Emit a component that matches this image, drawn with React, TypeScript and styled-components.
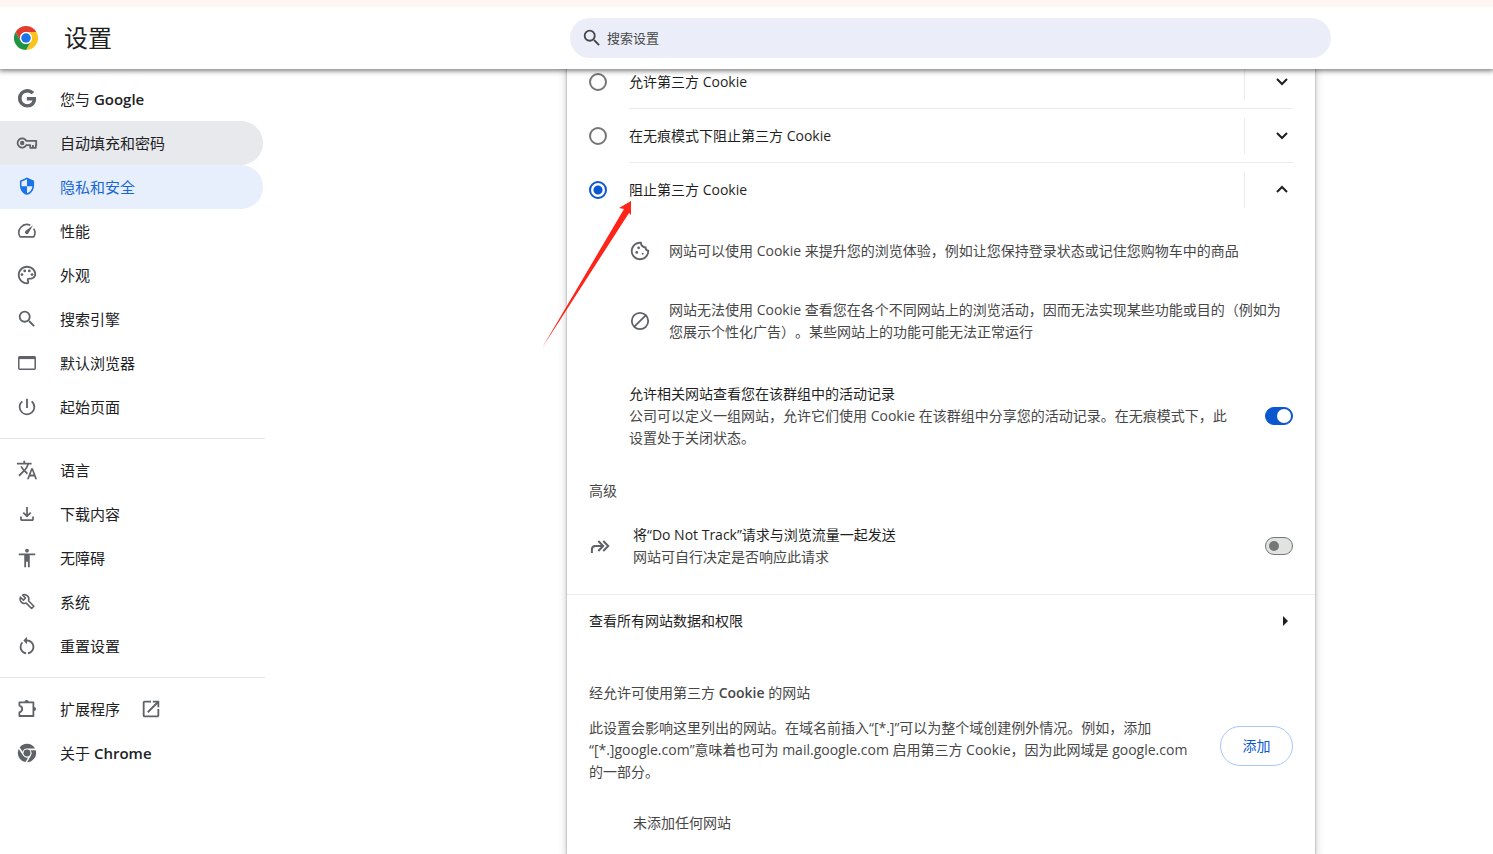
import React from 'react';
import styled, { createGlobalStyle, css } from 'styled-components';
import {
  MdAccessibility,
  MdOpenInNew,
  MdOutlineCookie,
  MdOutlinePalette,
  MdPowerSettingsNew,
  MdRestartAlt,
  MdSearch,
  MdSecurity,
  MdTranslate,
} from 'react-icons/md';

const GlobalStyle = createGlobalStyle`
  * { box-sizing: border-box; }
  body {
    margin: 0;
    background: #fff;
    color: #1f1f1f;
    font-family: "Open Sans", "Noto Sans CJK SC", sans-serif;
    font-size: 14px;
    line-height: 22px;
    text-spacing-trim: space-all;
  }
  p, h1, h2, ul { margin: 0; padding: 0; }
`;

const Page = styled.div`
  display: flex;
  flex-direction: column;
  min-height: 100vh;
`;

const Header = styled.header`
  position: sticky;
  top: 0;
  z-index: 2;
  display: flex;
  align-items: center;
  height: 69px;
  border-top: 7px solid #fff6f3;
  background: #fff;
  box-shadow: 0 1px 5px 1px rgba(0, 0, 0, 0.5);
`;

const Brand = styled.div`
  display: flex;
  flex: none;
  align-items: center;
  gap: 26px;
  width: 570px;
  padding-left: 14px;
`;

const Title = styled.h1`
  font-size: 24px;
  font-weight: 400;
  line-height: 32px;
`;

const SearchBox = styled.label`
  display: flex;
  flex: 1;
  align-items: center;
  gap: 4px;
  height: 40px;
  margin-right: 162px;
  padding: 0 11px;
  border-radius: 20px;
  background: #ebeef8;
  color: #474747;
`;

const SearchInput = styled.input`
  flex: 1;
  min-width: 0;
  padding: 0;
  border: 0;
  outline: 0;
  background: transparent;
  font: inherit;
  font-size: 13px;
  &::placeholder { color: #474747; opacity: 1; }
`;

const Body = styled.div`
  display: flex;
  flex: 1;
`;

const Sidebar = styled.nav`
  flex: none;
  width: 265px;
  padding-top: 8px;
`;

const NavGroup = styled.div`
  & + & {
    margin-top: 9px;
    padding-top: 9px;
    border-top: 1px solid #e6e6e8;
  }
`;

const NavItem = styled.a<{ $state?: 'hover' | 'selected' }>`
  display: flex;
  align-items: center;
  gap: 20px;
  height: 44px;
  margin-right: 2px;
  padding-left: 16px;
  border-radius: 0 22px 22px 0;
  color: #202124;
  font-size: 15px;
  text-decoration: none;
  & > svg { flex: none; color: #5f6368; }
  ${({ $state }) => $state === 'hover' && css`background: #e8e9ed;`}
  ${({ $state }) => $state === 'selected' && css`
    background: #e7effd;
    color: #1967d2;
    & > svg { color: #1a73e8; }
  `}
`;

const NavLabel = styled.span`
  padding-left: 2px;
`;

const Strong = styled.span`
  font-weight: 600;
`;

const Main = styled.main`
  display: flex;
  flex: 1;
  min-width: 0;
  padding: 0 178px 0 302px;
`;

const Card = styled.section`
  flex: 1;
  min-width: 0;
  margin-top: -14px;
  background: #fff;
  box-shadow: 0 1px 2px rgba(60, 64, 67, 0.5), 0 2px 7px 2px rgba(60, 64, 67, 0.2);
`;

const Section = styled.div`
  padding: 0 22px;
`;

const Option = styled.div`
  display: flex;
  align-items: center;
  gap: 22px;
`;

const Radio = styled.input`
  flex: none;
  width: 18px;
  height: 18px;
  margin: 0;
  border: 2px solid #747775;
  border-radius: 50%;
  appearance: none;
  background: #fff;
  &:checked {
    border-color: #0b57d0;
    background: radial-gradient(circle, #0b57d0 4px, #fff 5px);
  }
`;

const OptionBody = styled.div<{ $open?: boolean }>`
  display: flex;
  flex: 1;
  align-items: center;
  height: ${({ $open }) => ($open ? '53px' : '54px')};
  border-bottom: ${({ $open }) => ($open ? '0' : '1px solid #ebebeb')};
`;

const OptionLabel = styled.label`
  flex: 1;
`;

const Expand = styled.button`
  display: flex;
  align-items: center;
  justify-content: flex-end;
  width: 49px;
  height: 36px;
  padding: 0 1px 0 0;
  border: 0;
  border-left: 1px solid #ebebeb;
  background: transparent;
  color: #1f1f1f;
`;

const Details = styled.ul`
  display: flex;
  flex-direction: column;
  gap: 37px;
  padding: 24px 0 40px 40px;
  list-style: none;
`;

const Detail = styled.li`
  display: flex;
  align-items: center;
  gap: 18px;
  color: #474747;
  & > svg { flex: none; color: #5f6368; }
`;

const SettingRow = styled.div<{ $indent?: boolean }>`
  display: flex;
  align-items: center;
  gap: 22px;
  padding-left: ${({ $indent }) => ($indent ? '40px' : '0')};
`;

const SettingText = styled.label`
  flex: 1;
`;

const Secondary = styled.p`
  color: #474747;
`;

const Hint = styled.span`
  display: block;
  color: #474747;
`;

const Toggle = styled.input`
  display: flex;
  flex: none;
  align-items: center;
  width: 28px;
  height: 18px;
  margin: 0;
  padding: 0 3px;
  border: 1px solid #747775;
  border-radius: 9px;
  appearance: none;
  background: #e1e3e1;
  &::before {
    content: "";
    width: 10px;
    height: 10px;
    border-radius: 50%;
    background: #747775;
  }
  &:checked {
    justify-content: flex-end;
    padding: 0 1px;
    border-color: #0b57d0;
    background: #0b57d0;
  }
  &:checked::before {
    width: 14px;
    height: 14px;
    background: #fff;
  }
`;

const SubHeading = styled.h2`
  padding: 31px 0 22px;
  color: #474747;
  font-size: 14px;
  font-weight: 400;
`;

const LinkRow = styled.a`
  display: flex;
  align-items: center;
  justify-content: space-between;
  height: 53px;
  margin-top: 26px;
  padding: 0 22px;
  border-top: 1px solid #ebebeb;
  color: #1f1f1f;
  text-decoration: none;
`;

const ListHeading = styled.h2`
  padding: 35px 0 13px;
  color: #474747;
  font-size: 14px;
  font-weight: 400;
`;

const Exceptions = styled.div`
  display: flex;
  align-items: flex-start;
  justify-content: space-between;
`;

const AddButton = styled.button`
  flex: none;
  width: 73px;
  height: 40px;
  margin-top: 9px;
  padding: 0;
  border: 1px solid #a8c7fa;
  border-radius: 20px;
  background: #fff;
  color: #0b57d0;
  font: inherit;
`;

const Empty = styled.p`
  padding: 29px 0 18px 44px;
  color: #474747;
`;

const Pointer = styled.svg`
  position: absolute;
  z-index: 1;
  top: 201px;
  left: 542px;
  pointer-events: none;
`;

const ChromeLogo = () => (
  <svg width="24" height="24" viewBox="0 0 48 48" aria-hidden="true">
    <circle cx="24" cy="24" r="24" fill="#fff" />
    <path d="M3.2 12A24 24 0 0 1 44.8 12H24a12 12 0 0 0-10.4 18Z" fill="#e33b2e" />
    <path d="M44.8 12A24 24 0 0 1 24 48l10.4-18A12 12 0 0 0 24 12Z" fill="#fcc31e" />
    <path d="M24 48A24 24 0 0 1 3.2 12l10.4 18A12 12 0 0 0 34.4 30Z" fill="#229342" />
    <circle cx="24" cy="24" r="12" fill="#fff" />
    <circle cx="24" cy="24" r="9.5" fill="#1a73e8" />
  </svg>
);

const ChromeMono = () => (
  <svg width="22" height="22" viewBox="0 0 24 24" fill="currentColor" aria-hidden="true">
    <circle cx="12" cy="12" r="3.8" />
    <path d="M12 2a10 10 0 0 1 8.8 5.2H12a4.9 4.9 0 0 0-4.7 3.4L4 5.9A10 10 0 0 1 12 2Z" />
    <path d="M21.5 9a10 10 0 0 1-9.4 13l4.2-7.3A4.9 4.9 0 0 0 15.8 9Z" />
    <path d="M3 7.6l4.7 7.2a4.9 4.9 0 0 0 5.6 2L10.4 21.9A10 10 0 0 1 3 7.6Z" />
  </svg>
);

const GoogleMono = () => (
  <svg width="22" height="22" viewBox="-3 -2 30 30" fill="currentColor" stroke="currentColor" strokeWidth="1.4" aria-hidden="true">
    <path d="M12.48 10.92v3.28h7.84c-.24 1.84-.853 3.187-1.787 4.133-1.147 1.147-2.933 2.4-6.053 2.4-4.827 0-8.6-3.893-8.6-8.72s3.773-8.72 8.6-8.72c2.6 0 4.507 1.027 5.907 2.347l2.307-2.307C18.747 1.44 16.133 0 12.48 0 5.867 0 .307 5.387.307 12s5.56 12 12.173 12c3.573 0 6.267-1.173 8.373-3.36 2.16-2.16 2.84-5.213 2.84-7.667 0-.76-.053-1.467-.173-2.053H12.48z" />
  </svg>
);

const KeyIcon = () => (
  <svg width="22" height="22" viewBox="0 0 22 22" fill="none" stroke="currentColor" strokeWidth="1.8" strokeLinejoin="round" aria-hidden="true">
    <path d="M10.2 8.8A4.6 4.6 0 1 0 10.2 13.2H14.2V15.8H19.8V13.2H20.2V8.8Z" />
    <path d="M16.9 15.5V13" />
    <circle cx="6.2" cy="11" r="2.2" fill="currentColor" stroke="none" />
  </svg>
);

const ShieldIcon = () => (
  <MdSecurity size={22} viewBox="-2 -1 28 28" aria-hidden />
);

const SpeedIcon = () => (
  <svg width="22" height="22" viewBox="0 0 22 22" fill="none" stroke="currentColor" strokeWidth="1.6" aria-hidden="true">
    <path d="M14.3 5.3A8 8 0 0 0 4.2 16.9H17.8A8 8 0 0 0 17.7 8.6" strokeLinejoin="round" />
    <path d="M17 5.3 12.4 13.3A1.9 1.9 0 1 1 9.7 10.7Z" fill="currentColor" stroke="none" />
  </svg>
);

const WindowIcon = () => (
  <svg width="22" height="22" viewBox="0 0 22 22" fill="none" stroke="currentColor" strokeWidth="1.5" aria-hidden="true">
    <rect x="2.8" y="4.8" width="16.4" height="12.4" rx="1" />
    <path d="M2.5 5.9H19.5" strokeWidth="2.4" />
  </svg>
);

const DownloadIcon = () => (
  <svg width="22" height="22" viewBox="-30 -990 1020 1020" fill="currentColor" aria-hidden="true">
    <path d="M480-320 280-520l56-58 104 104v-326h80v326l104-104 56 58-200 200ZM240-160q-33 0-56-24T160-240v-120h80v120h480v-120h80v120q0 33-24 56T720-160H240Z" />
  </svg>
);

const WrenchIcon = () => (
  <svg width="22" height="22" viewBox="0 0 22 22" fill="none" stroke="currentColor" strokeWidth="1.6" strokeLinejoin="round" aria-hidden="true">
    <path d="M4.5 6.2 7.4 9.1 9.5 7 6.6 4.1A4.4 4.4 0 0 1 12.5 9.8L17.9 15.2 15.6 17.5 10.2 12.1A4.4 4.4 0 0 1 4.5 6.2Z" />
  </svg>
);

const PuzzleIcon = () => (
  <svg width="22" height="22" viewBox="0 0 22 22" fill="none" stroke="currentColor" strokeWidth="1.8" strokeLinejoin="round" aria-hidden="true">
    <path d="M3.4 7.6V4.4H17.4V18H3.4V14.3Q6.2 13.4 6.2 11Q6.2 8.5 3.4 7.6Z" />
    <path d="M8.6 4A2.1 2.1 0 0 1 12.8 4ZM18 8.9A2.1 2.1 0 0 1 18 13.1Z" fill="currentColor" stroke="none" />
  </svg>
);

const BlockedIcon = () => (
  <svg width="22" height="22" viewBox="0 0 22 22" fill="none" stroke="currentColor" strokeWidth="1.8" aria-hidden="true">
    <circle cx="11" cy="11" r="8.2" />
    <path d="M5.3 16.7 16.7 5.3" />
  </svg>
);

const ForwardIcon = () => (
  <svg width="22" height="22" viewBox="0 0 22 22" fill="none" stroke="#5f6368" strokeWidth="2" aria-hidden="true">
    <path d="M2.9 18V14.5Q2.9 11 6.2 11H13.5" />
    <path d="M9.3 6 14.2 11 9.3 16M14.3 6 19.2 11 14.3 16" />
  </svg>
);

const Chevron = ({ up = false }: { up?: boolean }) => (
  <svg width="20" height="20" viewBox="0 0 20 20" fill="none" stroke="currentColor" strokeWidth="2" aria-hidden="true">
    <path d={up ? 'M5 12 10 7 15 12' : 'M5 7 10 12 15 7'} />
  </svg>
);

const ArrowRight = () => (
  <svg width="10" height="10" viewBox="0 0 10 10" fill="currentColor" aria-hidden="true">
    <path d="M0 0 5 5 0 10Z" />
  </svg>
);

const icon = { size: 22, 'aria-hidden': true } as const;

type Item = {
  label: React.ReactNode;
  icon: React.ReactNode;
  state?: 'hover' | 'selected';
  external?: boolean;
};

const groups: Item[][] = [
  [
    { label: <>您与 <Strong>Google</Strong></>, icon: <GoogleMono /> },
    { label: '自动填充和密码', icon: <KeyIcon />, state: 'hover' },
    { label: '隐私和安全', icon: <ShieldIcon />, state: 'selected' },
    { label: '性能', icon: <SpeedIcon /> },
    { label: '外观', icon: <MdOutlinePalette {...icon} /> },
    { label: '搜索引擎', icon: <MdSearch {...icon} /> },
    { label: '默认浏览器', icon: <WindowIcon /> },
    { label: '起始页面', icon: <MdPowerSettingsNew {...icon} /> },
  ],
  [
    { label: '语言', icon: <MdTranslate {...icon} /> },
    { label: '下载内容', icon: <DownloadIcon /> },
    { label: '无障碍', icon: <MdAccessibility {...icon} /> },
    { label: '系统', icon: <WrenchIcon /> },
    { label: '重置设置', icon: <MdRestartAlt {...icon} /> },
  ],
  [
    { label: '扩展程序', icon: <PuzzleIcon />, external: true },
    { label: <>关于 <Strong>Chrome</Strong></>, icon: <ChromeMono /> },
  ],
];

const options = [
  { id: 'allow', label: '允许第三方 Cookie' },
  { id: 'incognito', label: '在无痕模式下阻止第三方 Cookie' },
  { id: 'block', label: '阻止第三方 Cookie' },
];

export default function App() {
  const [choice, setChoice] = React.useState('block');

  return (
    <>
      <GlobalStyle />
      <Page>
        <Header>
          <Brand>
            <ChromeLogo />
            <Title>设置</Title>
          </Brand>
          <SearchBox>
            <MdSearch {...icon} />
            <SearchInput type="search" placeholder="搜索设置" aria-label="搜索设置" />
          </SearchBox>
        </Header>
        <Body>
          <Sidebar>
            {groups.map((items, g) => (
              <NavGroup key={g}>
                {items.map((item, i) => (
                  <NavItem key={i} href="#" $state={item.state}>
                    {item.icon}
                    <NavLabel>{item.label}</NavLabel>
                    {item.external && <MdOpenInNew {...icon} />}
                  </NavItem>
                ))}
              </NavGroup>
            ))}
          </Sidebar>
          <Main>
            <Card>
              <Section>
                {options.map(({ id, label }) => (
                  <Option key={id}>
                    <Radio
                      type="radio"
                      name="cookies"
                      id={id}
                      checked={choice === id}
                      onChange={() => setChoice(id)}
                    />
                    <OptionBody $open={id === 'block'}>
                      <OptionLabel htmlFor={id}>{label}</OptionLabel>
                      <Expand type="button" aria-label="展开" aria-expanded={id === 'block'}>
                        <Chevron up={id === 'block'} />
                      </Expand>
                    </OptionBody>
                  </Option>
                ))}
                <Details>
                  <Detail>
                    <MdOutlineCookie {...icon} />
                    <p>网站可以使用 Cookie 来提升您的浏览体验，例如让您保持登录状态或记住您购物车中的商品</p>
                  </Detail>
                  <Detail>
                    <BlockedIcon />
                    <p>
                      网站无法使用 Cookie 查看您在各个不同网站上的浏览活动，因而无法实现某些功能或目的（例如为
                      <br />
                      您展示个性化广告）。某些网站上的功能可能无法正常运行
                    </p>
                  </Detail>
                </Details>
                <SettingRow $indent>
                  <SettingText htmlFor="related">
                    允许相关网站查看您在该群组中的活动记录
                    <Hint>
                      公司可以定义一组网站，允许它们使用 Cookie 在该群组中分享您的活动记录。在无痕模式下，此
                      <br />
                      设置处于关闭状态。
                    </Hint>
                  </SettingText>
                  <Toggle type="checkbox" role="switch" id="related" defaultChecked />
                </SettingRow>
                <SubHeading>高级</SubHeading>
                <SettingRow>
                  <ForwardIcon />
                  <SettingText htmlFor="dnt">
                    将“Do Not Track”请求与浏览流量一起发送
                    <Hint>网站可自行决定是否响应此请求</Hint>
                  </SettingText>
                  <Toggle type="checkbox" role="switch" id="dnt" />
                </SettingRow>
              </Section>
              <LinkRow href="#">
                查看所有网站数据和权限
                <ArrowRight />
              </LinkRow>
              <Section>
                <ListHeading>
                  经允许可使用第三方 <Strong>Cookie</Strong> 的网站
                </ListHeading>
                <Exceptions>
                  <Secondary>
                    此设置会影响这里列出的网站。在域名前插入“[*.]”可以为整个域创建例外情况。例如，添加
                    <br />
                    “[*.]google.com”意味着也可为 mail.google.com 启用第三方 Cookie，因为此网域是 google.com
                    <br />
                    的一部分。
                  </Secondary>
                  <AddButton type="button">添加</AddButton>
                </Exceptions>
                <Empty>未添加任何网站</Empty>
              </Section>
            </Card>
          </Main>
        </Body>
      </Page>
      <Pointer width="90" height="147" viewBox="0 0 90 147" fill="#ff2419" aria-hidden="true">
        <path d="M89 0 77 7 82 8 0 147 87 12 89 14Z" />
      </Pointer>
    </>
  );
}
